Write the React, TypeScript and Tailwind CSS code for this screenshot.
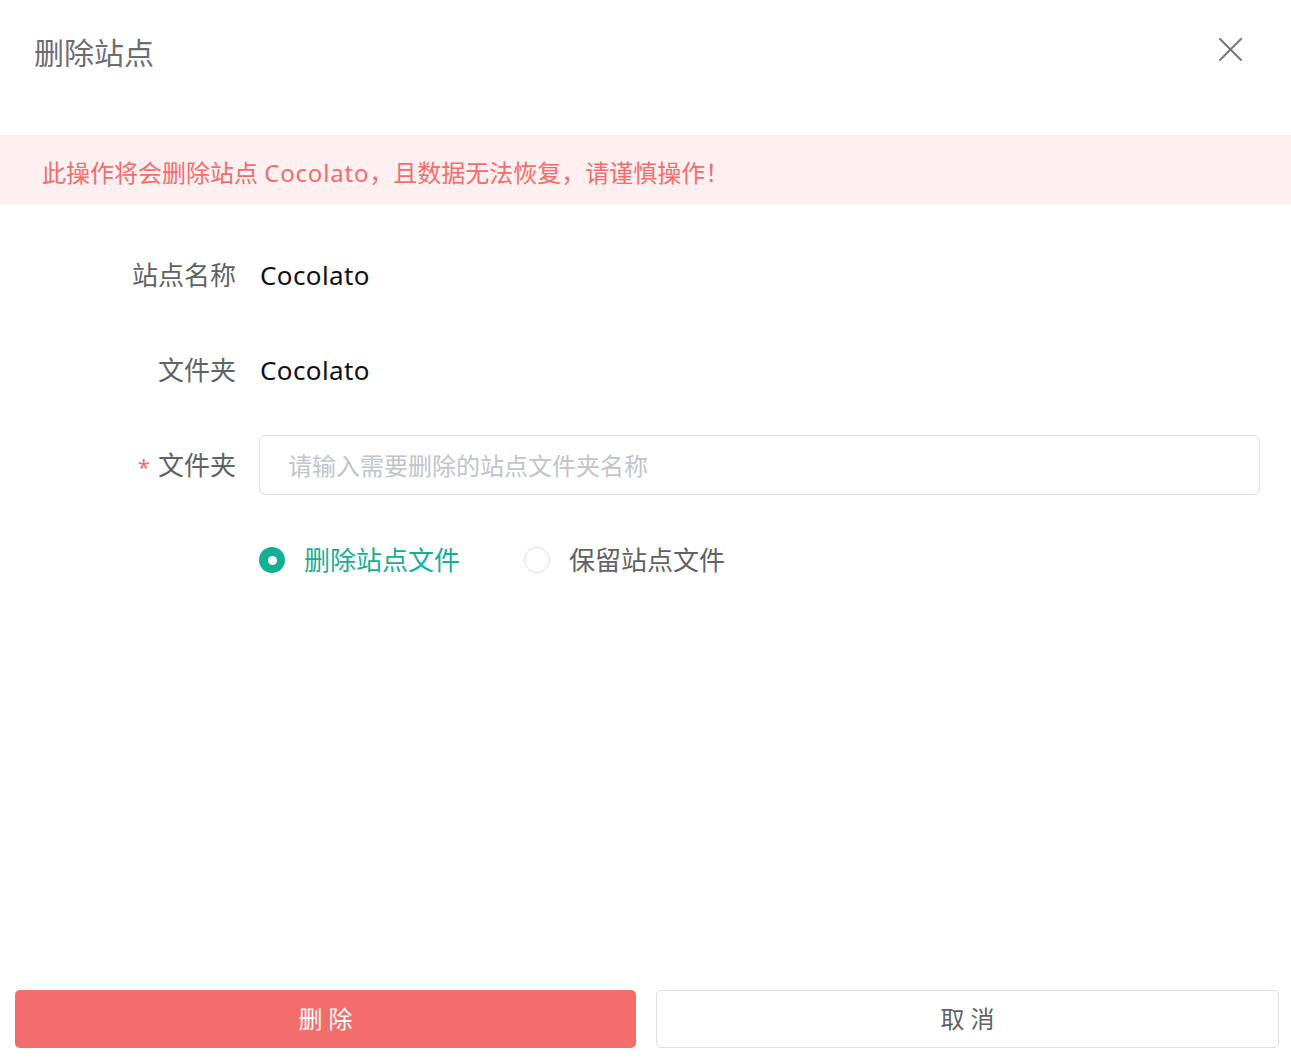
const font = { fontFamily: '"Noto Sans", "Noto Sans CJK SC", sans-serif' }

const InfoRow = ({ label, value }: { label: string; value: string }) => (
    <div className="flex items-center h-[60px]">
        <div className="w-[236px] text-right text-[26px] text-[#606266] shrink-0">{label}</div>
        <div className="ml-6 text-[26px] text-[#111] tracking-[0.4px]">{value}</div>
    </div>
)

const Radio = ({ checked, label }: { checked: boolean; label: string }) => (
    <label className="flex items-center cursor-pointer">
        {checked ? (
            <span className="w-[26px] h-[26px] rounded-full bg-[#13b096] flex items-center justify-center">
                <span className="w-[9px] h-[9px] rounded-full bg-white" />
            </span>
        ) : (
            <span className="w-[26px] h-[26px] rounded-full border border-[#dcdfe6] bg-white" />
        )}
        <span className={`ml-[19px] text-[26px] ${checked ? 'text-[#13b096]' : 'text-[#606266]'}`}>{label}</span>
    </label>
)

const App = () => {
    return (
        <div className="w-full h-[1060px] bg-white flex flex-col" style={font}>
            {/* header */}
            <div className="h-[135px] flex justify-between items-start pl-[34px] pr-[49px] pt-[30px] shrink-0">
                <h1 className="text-[30px] leading-[45px] text-[#6b6d71]">删除站点</h1>
                <button className="mt-[8px]">
                    <svg width="23" height="23" viewBox="0 0 23 23" fill="none" stroke="#73767a" strokeWidth="2" strokeLinecap="round">
                        <line x1="1" y1="1" x2="22" y2="22" />
                        <line x1="22" y1="1" x2="1" y2="22" />
                    </svg>
                </button>
            </div>

            {/* warning */}
            <div className="h-[70px] bg-[#fef0f0] flex items-center pl-[42px] pt-[6px] shrink-0">
                <p className="text-[24px] text-[#f56c6c]">此操作将会删除站点 <span className="tracking-[0.8px]">Cocolato</span>，且数据无法恢复，请谨慎操作！</p>
            </div>

            {/* form */}
            <div className="flex flex-col gap-[35px] mt-10 pr-[31px]">
                <InfoRow label="站点名称" value="Cocolato" />
                <InfoRow label="文件夹" value="Cocolato" />

                <div className="flex items-center h-[60px]">
                    <div className="w-[236px] text-right text-[26px] text-[#606266] shrink-0">
                        <span className="text-[#f56c6c] text-[22px] mr-2">*</span>文件夹
                    </div>
                    <input
                        className="ml-[23px] flex-1 h-[60px] border border-[#dcdfe6] rounded-[6px] px-[28px] text-[24px] text-[#333] placeholder:text-[#c0c4cc] outline-none"
                        placeholder="请输入需要删除的站点文件夹名称"
                    />
                </div>

                <div className="flex items-center h-[60px] pl-[259px] gap-[64px]">
                    <Radio checked label="删除站点文件" />
                    <Radio checked={false} label="保留站点文件" />
                </div>
            </div>

            {/* footer */}
            <div className="mt-auto flex gap-5 pl-[15px] pr-[12px] pb-[12px]">
                <button className="flex-1 h-[58px] rounded-[5px] bg-[#f46d6d] text-white text-[24px] leading-none">删 除</button>
                <button className="flex-1 h-[58px] rounded-[5px] border border-[#dcdfe6] bg-white text-[#606266] text-[24px] leading-none">取 消</button>
            </div>
        </div>
    )
}

export default App
